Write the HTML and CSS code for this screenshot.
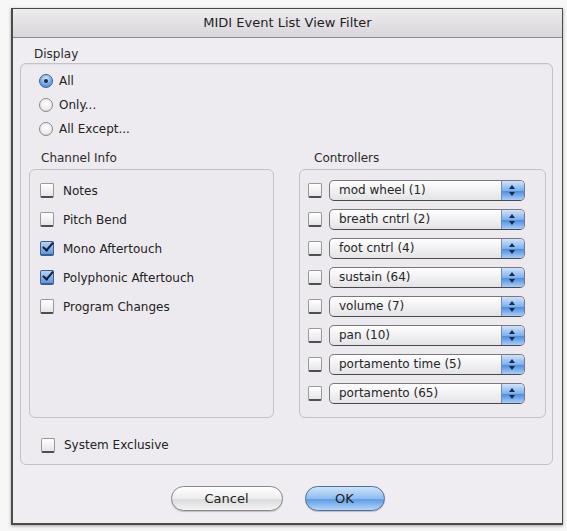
FILE: index.html
```html
<!DOCTYPE html>
<html>
<head>
<meta charset="utf-8">
<title>MIDI Event List View Filter</title>
<link rel="stylesheet" href="styles.css">
</head>
<body>
<div class="window">
  <div class="titlebar">MIDI Event List View Filter</div>
  <div class="content">
    <div class="label display-label">Display</div>
    <div class="group outer">
      <div class="radios">
        <div class="radio-row"><span class="radio on"></span><span>All</span></div>
        <div class="radio-row"><span class="radio"></span><span>Only...</span></div>
        <div class="radio-row"><span class="radio"></span><span>All Except...</span></div>
      </div>
      <div class="columns">
        <div class="col">
          <div class="label col-label">Channel Info</div>
          <div class="group box channel">
            <div class="check-row"><span class="check"></span><span>Notes</span></div>
            <div class="check-row"><span class="check"></span><span>Pitch Bend</span></div>
            <div class="check-row"><span class="check on"></span><span>Mono Aftertouch</span></div>
            <div class="check-row"><span class="check on"></span><span>Polyphonic Aftertouch</span></div>
            <div class="check-row"><span class="check"></span><span>Program Changes</span></div>
          </div>
        </div>
        <div class="col">
          <div class="label col-label ctl-label">Controllers</div>
          <div class="group box controllers">
            <div class="ctl-row"><span class="check"></span><div class="popup"><span class="popup-text">mod wheel (1)</span><span class="popup-arrows"></span></div></div>
            <div class="ctl-row"><span class="check"></span><div class="popup"><span class="popup-text">breath cntrl (2)</span><span class="popup-arrows"></span></div></div>
            <div class="ctl-row"><span class="check"></span><div class="popup"><span class="popup-text">foot cntrl (4)</span><span class="popup-arrows"></span></div></div>
            <div class="ctl-row"><span class="check"></span><div class="popup"><span class="popup-text">sustain (64)</span><span class="popup-arrows"></span></div></div>
            <div class="ctl-row"><span class="check"></span><div class="popup"><span class="popup-text">volume (7)</span><span class="popup-arrows"></span></div></div>
            <div class="ctl-row"><span class="check"></span><div class="popup"><span class="popup-text">pan (10)</span><span class="popup-arrows"></span></div></div>
            <div class="ctl-row"><span class="check"></span><div class="popup"><span class="popup-text">portamento time (5)</span><span class="popup-arrows"></span></div></div>
            <div class="ctl-row"><span class="check"></span><div class="popup"><span class="popup-text">portamento (65)</span><span class="popup-arrows"></span></div></div>
          </div>
        </div>
      </div>
      <div class="check-row sysex"><span class="check"></span><span>System Exclusive</span></div>
    </div>
    <div class="buttons">
      <button class="btn cancel">Cancel</button>
      <button class="btn ok">OK</button>
    </div>
  </div>
</div>
</body>
</html>
```

FILE: styles.css
```css
html, body {
  margin: 0;
  padding: 0;
}
body {
  background: #f7f7f7;
  font-family: "DejaVu Sans", "Liberation Sans", sans-serif;
  font-size: 12px;
  color: #222;
  width: 567px;
  height: 531px;
  overflow: hidden;
}
.window {
  margin: 8px 0 0 11px;
  width: 549px;
  height: 514px;
  border: 1px solid #4a4a4c;
  border-left-width: 2px;
  border-bottom-width: 2px;
  background: #f0edf2;
  box-shadow: 0 1px 3px rgba(0,0,0,0.35);
  box-sizing: content-box;
}
.titlebar {
  height: 28px;
  line-height: 28px;
  text-align: center;
  font-size: 13px;
  color: #1e1e1e;
  background: linear-gradient(#eeecef, #d8d6da);
  border-bottom: 1px solid #8e8c90;
}
.content {
  padding: 0 9px 0 7px;
}
.label {
  height: 17px;
  line-height: 17px;
  color: #2a2a2a;
}
.display-label {
  margin-top: 8px;
  padding-left: 14px;
}
.group {
  border: 1px solid #c3c1c6;
  border-radius: 6px;
  background: #eeebf0;
}
.outer {
  height: 395px;
  padding: 5px 7px 0 8px;
  box-sizing: content-box;
  box-shadow: inset 0 1px 0 #e2e0e4;
}
.radios {
  display: flex;
  flex-direction: column;
}
.radio-row {
  height: 24px;
  display: flex;
  align-items: center;
  gap: 6px;
  padding-left: 10px;
}
.radio {
  width: 14px;
  height: 14px;
  border-radius: 50%;
  box-sizing: border-box;
  border: 1px solid #8a888c;
  background: radial-gradient(circle at 50% 35%, #ffffff 0%, #ececec 60%, #c9c9cb 100%);
  position: relative;
}
.radio.on {
  border-color: #3e5f9a;
  background: radial-gradient(circle at 50% 30%, #d5e6fa 0%, #7eaee8 50%, #3b78d0 100%);
}
.radio.on::after {
  content: "";
  position: absolute;
  left: 4px;
  top: 4px;
  width: 4px;
  height: 4px;
  border-radius: 50%;
  background: #1c2a44;
}
.columns {
  display: grid;
  grid-template-columns: 245px 247px;
  column-gap: 25px;
  margin-top: 9px;
}
.col {
  display: flex;
  flex-direction: column;
}
.col-label {
  padding-left: 12px;
  margin-bottom: 2px;
}
.ctl-label {
  padding-left: 15px;
}
.box {
  height: 249px;
  box-sizing: border-box;
  padding-top: 6px;
  background: #eceaee;
}
.check-row {
  height: 29px;
  display: flex;
  align-items: center;
  gap: 9px;
  padding-left: 10px;
}
.check {
  width: 14px;
  height: 15px;
  box-sizing: border-box;
  border: 1px solid #9a989c;
  border-bottom: 2px solid #4e4d50;
  border-radius: 2px;
  background: linear-gradient(#ffffff, #e6e5e8);
  position: relative;
  flex: none;
}
.check.on {
  border-color: #3f5c8e;
  background: linear-gradient(#b9d3f3, #5e95dc);
}
.check.on::after {
  content: "";
  position: absolute;
  left: 4px;
  top: -2px;
  width: 4px;
  height: 9px;
  border-right: 2.5px solid #10203a;
  border-bottom: 2.5px solid #10203a;
  transform: rotate(40deg);
}
.ctl-row {
  height: 29px;
  display: flex;
  align-items: center;
  padding-left: 8px;
  gap: 7px;
}
.popup {
  width: 196px;
  height: 21px;
  box-sizing: border-box;
  border: 1px solid #7a787d;
  border-bottom-color: #4a494c;
  border-radius: 5px;
  background: linear-gradient(#ffffff, #f1f0f3 50%, #e4e3e6);
  display: flex;
  align-items: center;
  overflow: hidden;
}
.popup-text {
  flex: 1;
  padding-left: 9px;
  line-height: 19px;
  color: #262626;
}
.popup-arrows {
  width: 22px;
  height: 100%;
  background: linear-gradient(#d0e3fa, #7eb0ee 50%, #4f8fe0 55%, #a9cdf7);
  position: relative;
  border-left: 1px solid #6f8fbf;
}
.popup-arrows::before,
.popup-arrows::after {
  content: "";
  position: absolute;
  left: 7px;
  border-left: 3.5px solid transparent;
  border-right: 3.5px solid transparent;
}
.popup-arrows::before {
  top: 4px;
  border-bottom: 4px solid #1b2a45;
}
.popup-arrows::after {
  bottom: 4px;
  border-top: 4px solid #1b2a45;
}
.sysex {
  margin-top: 17px;
  height: 20px;
  padding-left: 12px;
}
.buttons {
  display: flex;
  justify-content: center;
  gap: 22px;
  margin-top: 21px;
  padding-right: 18px;
}
.btn {
  height: 25px;
  border-radius: 13px;
  font-family: "DejaVu Sans", "Liberation Sans", sans-serif;
  font-size: 13px;
  color: #222;
  padding: 0;
}
.cancel {
  width: 112px;
  border: 1px solid #8a888c;
  background: linear-gradient(#ffffff, #ededee 50%, #dcdcde 55%, #f4f4f5);
  box-shadow: 0 1px 1px rgba(0,0,0,0.2);
}
.ok {
  width: 80px;
  border: 1px solid #4f6e9f;
  background: linear-gradient(#cfe3fa, #8fbcf0 50%, #5e9de6 55%, #b6d6f8);
  box-shadow: 0 1px 1px rgba(0,0,0,0.2);
}
```
